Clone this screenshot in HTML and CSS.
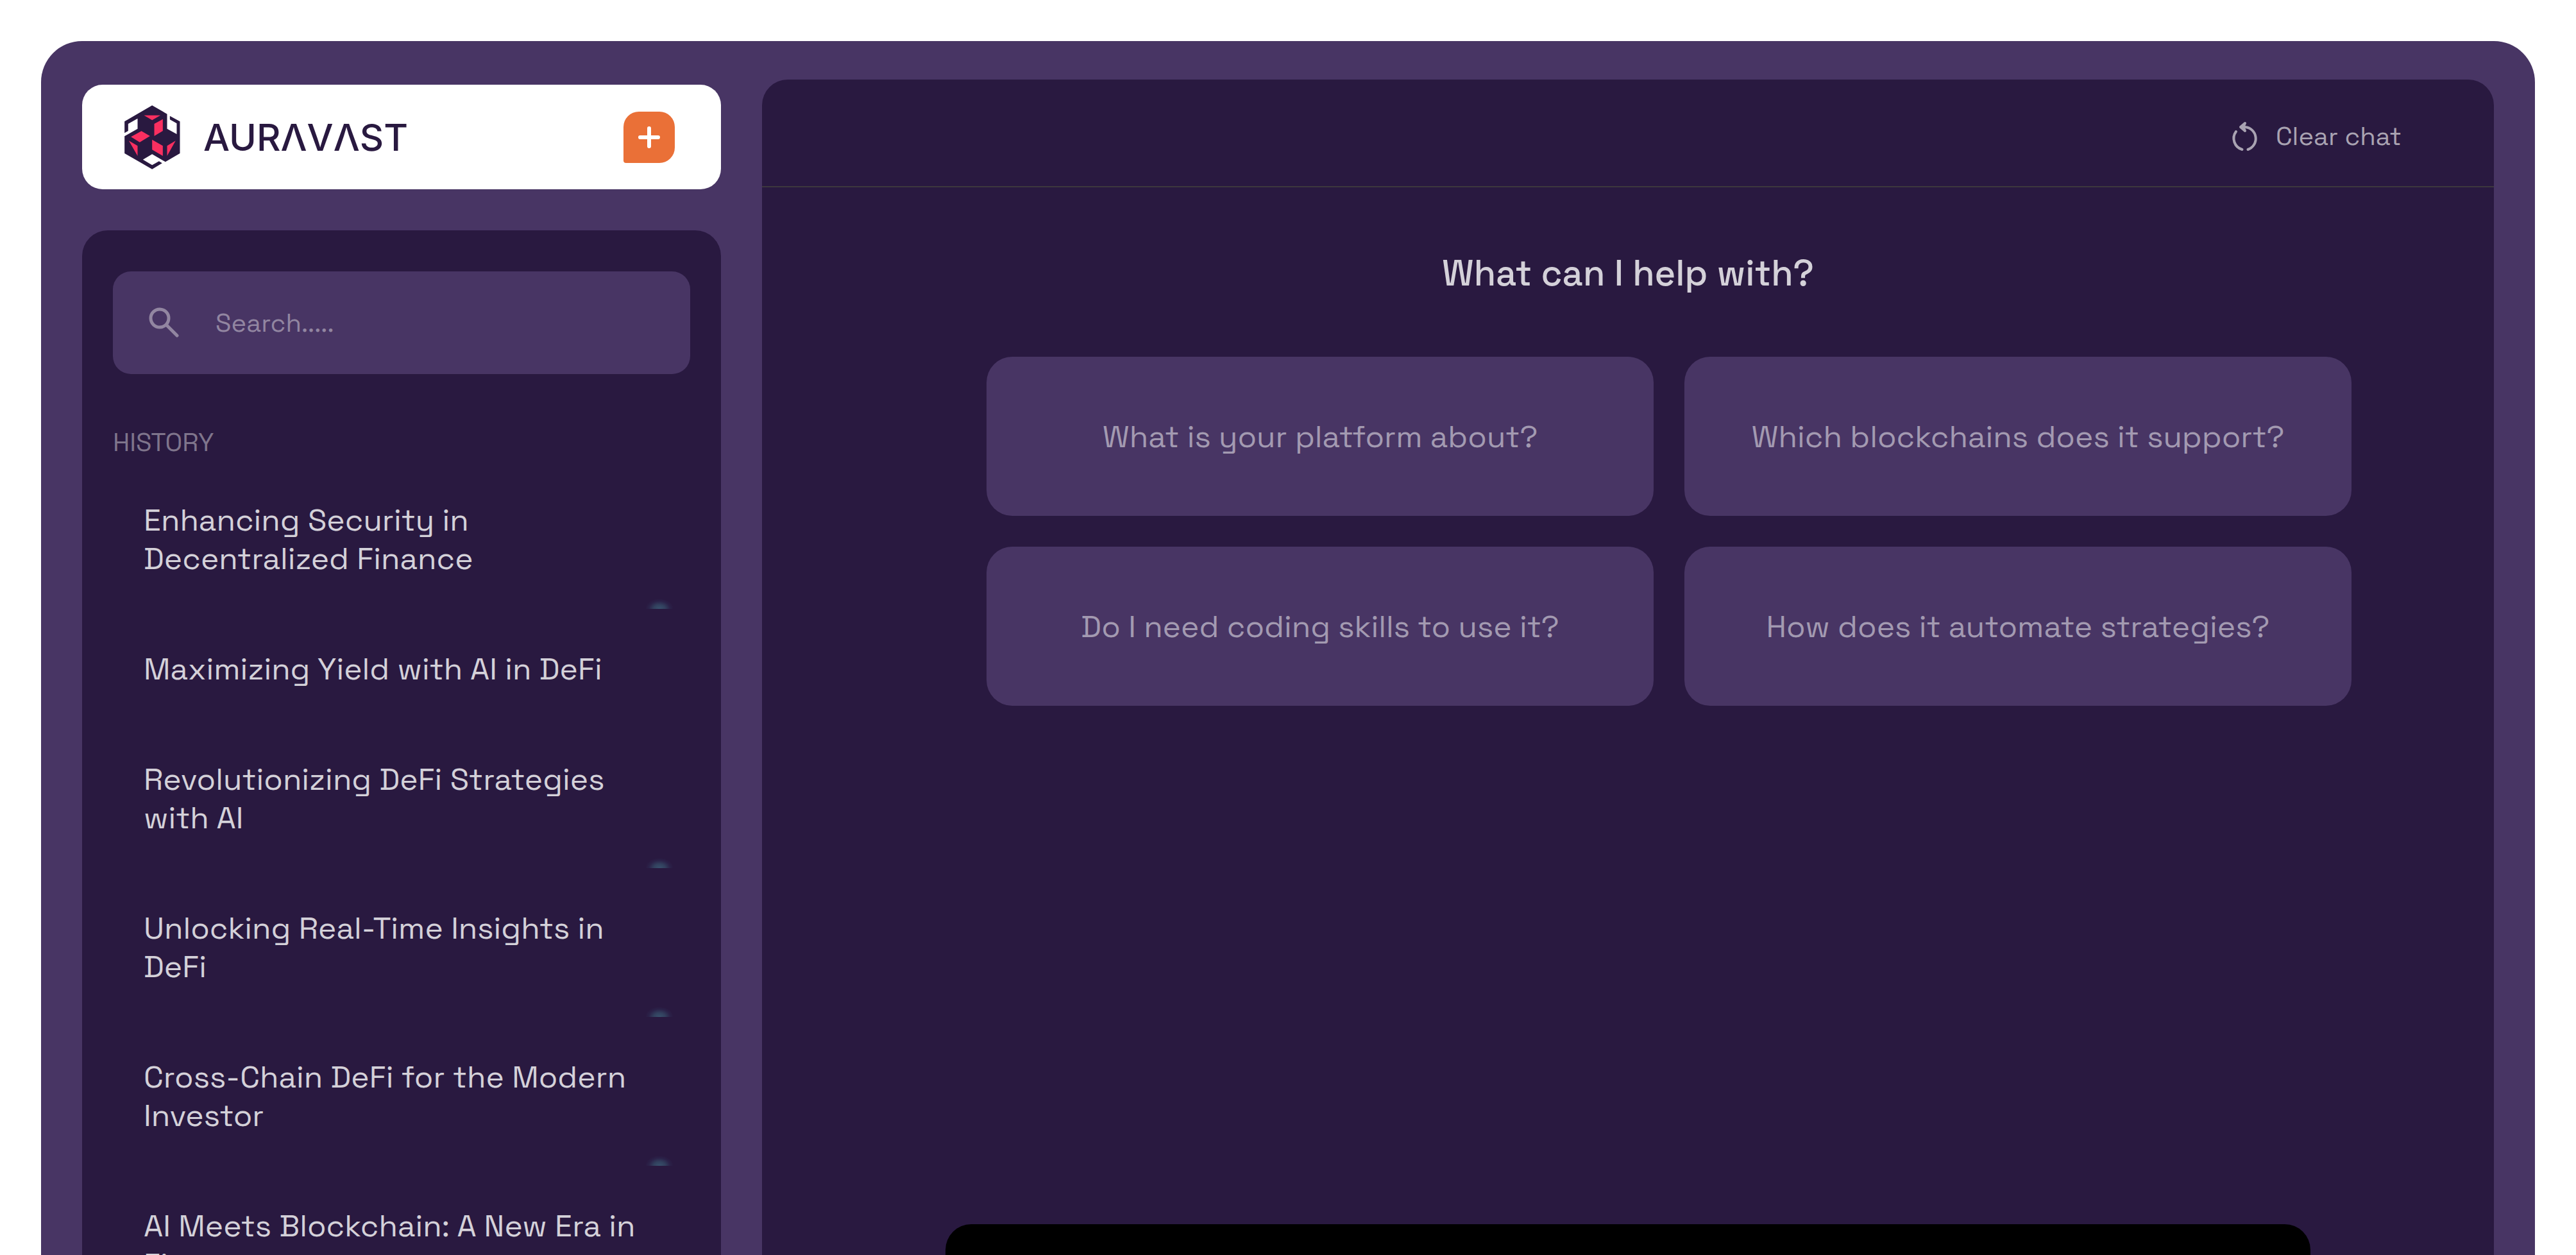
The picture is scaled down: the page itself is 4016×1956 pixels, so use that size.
FILE: index.html
```html
<!DOCTYPE html>
<html lang="en">
<head>
<meta charset="utf-8">
<title>Auravast</title>
<link rel="stylesheet" href="styles.css">
</head>
<body>
<div class="shell">
  <aside class="sidebar">
    <header class="brand">
      <svg class="brand-mark" viewBox="44 70 260 300" aria-hidden="true">
        <path fill="#291940" d="M173 71L243 111V180L288 205V155L256 137V120L303 146V295L235 335L173 299L130 324L173 350L205 332L220 341L173 369L44 295V215L105 180V132L61 157V190L44 200V146Z"/>
        <path fill="#f92f60" d="M135 117H212L173 140ZM223 135V190L183 214V157ZM123 191L163 214L115 243L74 218ZM64 236L105 260V307ZM173 231L223 260V307L173 278ZM283 236L243 307V260Z"/>
      </svg>
      <span class="brand-name">AURΛVΛST</span>
      <button class="new-chat" type="button" aria-label="New chat">
        <svg viewBox="0 0 40 40" width="40" height="40" fill="none" stroke="#fff" stroke-width="6" stroke-linecap="round"><path d="M20 6V34M6 20H34"/></svg>
      </button>
    </header>
    <nav class="panel">
      <label class="search">
        <svg viewBox="0 0 48 48" width="48" height="48" fill="none" stroke="currentColor" stroke-width="5" stroke-linecap="round" aria-hidden="true"><circle cx="17" cy="17" r="14"/><path d="M28 28L44 44"/></svg>
        <input type="text" placeholder="Search....." aria-label="Search">
      </label>
      <h2 class="history-title">HISTORY</h2>
      <ul class="history">
        <li><a class="item glow" href="#">Enhancing Security in Decentralized Finance</a></li>
        <li><a class="item" href="#">Maximizing Yield with AI in DeFi</a></li>
        <li><a class="item glow" href="#">Revolutionizing DeFi Strategies with AI</a></li>
        <li><a class="item glow" href="#">Unlocking Real-Time Insights in DeFi</a></li>
        <li><a class="item glow" href="#">Cross-Chain DeFi for the Modern Investor</a></li>
        <li><a class="item glow" href="#">AI Meets Blockchain: A New Era in Finance</a></li>
      </ul>
    </nav>
  </aside>
  <main class="chat">
    <header class="chat-bar">
      <button class="clear" type="button">
        <svg viewBox="0 0 48 48" width="48" height="48" fill="none" stroke="currentColor" stroke-width="4" stroke-linecap="round" stroke-linejoin="round" aria-hidden="true"><path d="M10 17A18 18 0 0 0 19.500 45M18 10H24A18 18 0 0 1 28.500 45"/><path fill="currentColor" d="M24 4L17 10L24 16L21 10Z"/></svg>
        Clear chat
      </button>
    </header>
    <h1 class="prompt">What can I help with?</h1>
    <div class="suggestions">
      <button class="card" type="button">What is your platform about?</button>
      <button class="card" type="button">Which blockchains does it support?</button>
      <button class="card" type="button">Do I need coding skills to use it?</button>
      <button class="card" type="button">How does it automate strategies?</button>
    </div>
    <footer class="composer"></footer>
  </main>
</div>
</body>
</html>
```
FILE: styles.css
```css
* { box-sizing: border-box; }

body {
  margin: 0;
  background: #fff;
  font-family: "Space Grotesk", Inter, sans-serif;
  font-weight: 400;
}

button {
  border: 0;
  padding: 0;
  font: inherit;
  cursor: pointer;
}

.shell {
  display: flex;
  gap: 64px;
  height: calc(100vh - 64px);
  margin: 64px 64px 0;
  padding: 60px 64px 0;
  overflow: hidden;
  background: #483564;
  border-radius: 64px 64px 0 0;
}

.sidebar {
  display: flex;
  flex-direction: column;
  flex: none;
  gap: 64px;
  width: 996px;
  padding-top: 8px;
}

.brand {
  display: flex;
  align-items: center;
  flex: none;
  height: 163px;
  padding: 0 72px 0 66px;
  background: #fff;
  border-radius: 32px;
}

.brand-mark { width: 87px; height: 100px; }

.brand-name {
  margin-left: 36px;
  color: #291940;
  font-family: Inter, sans-serif;
  font-size: 58px;
  font-weight: 500;
}

.new-chat {
  display: grid;
  place-items: center;
  width: 80px;
  height: 80px;
  margin-left: auto;
  background: #ea7037;
  border-radius: 24px 24px 24px 4px;
}

.panel {
  flex: 1;
  min-height: 0;
  overflow: hidden;
  padding: 64px 48px 0;
  background: #291940;
  border-radius: 40px 40px 0 0;
}

.search {
  display: flex;
  align-items: center;
  gap: 56px;
  height: 160px;
  padding: 0 56px;
  color: #9286a1;
  background: #483564;
  border-radius: 28px;
}

.search input {
  flex: 1;
  min-width: 0;
  border: 0;
  padding: 0;
  outline: 0;
  color: inherit;
  background: none;
  font: inherit;
  font-size: 40px;
}

.search input::placeholder { color: inherit; opacity: 1; }

.history-title {
  margin: 80px 0 0;
  color: #7f758c;
  font-size: 40px;
  font-weight: 400;
  line-height: 54px;
}

.history {
  margin: 0;
  padding: 0;
  list-style: none;
}

.item {
  display: block;
  padding: 64px 48px 48px;
  color: #d4d1d9;
  font-size: 48px;
  line-height: 60px;
  text-decoration: none;
}

.glow {
  background: radial-gradient(22px 16px at 50% 100%, #38506c, #32405e 40%, #2b2249 75%, #291940) no-repeat right 26px bottom / 44px 16px;
}

.chat {
  display: flex;
  flex: 1;
  flex-direction: column;
  align-items: center;
  min-width: 0;
  background: #291940;
  border-radius: 40px 40px 0 0;
}

.chat-bar {
  display: flex;
  justify-content: flex-end;
  align-self: stretch;
  height: 168px;
  padding: 10px 144px 0 0;
  border-bottom: 2px solid #3d383e;
}

.clear {
  display: flex;
  align-items: center;
  gap: 24px;
  color: #a9a3b2;
  background: none;
  font-size: 40px;
}

.prompt {
  margin: 98px 0 94px;
  color: #d4d1d9;
  font-size: 56px;
  font-weight: 500;
  line-height: 72px;
}

.suggestions {
  display: grid;
  grid-template-columns: 1fr 1fr;
  gap: 48px;
  box-sizing: content-box;
  width: 100%;
  max-width: 2128px;
  padding-left: 128px;
}

.card {
  height: 248px;
  color: #a39ab1;
  background: #483564;
  border-radius: 40px;
  font-size: 48px;
}

.composer {
  width: 100%;
  max-width: 2128px;
  height: 48px;
  margin-top: auto;
  background: #000;
  border-radius: 40px 40px 0 0;
}
```
